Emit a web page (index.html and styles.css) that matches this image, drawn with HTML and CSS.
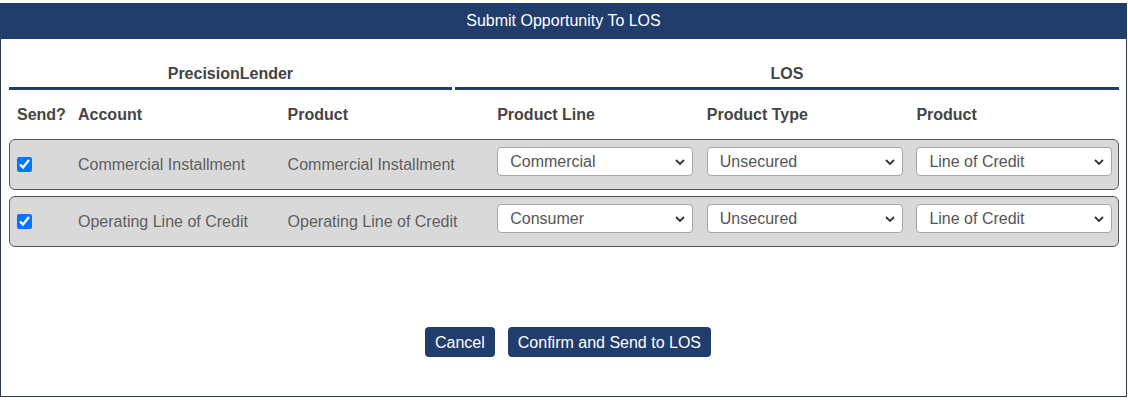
FILE: index.html
```html
<!DOCTYPE html>
<html>
<head>
<meta charset="utf-8">
<link rel="stylesheet" href="styles.css">
</head>
<body>
<div class="dialog">
  <div class="titlebar">Submit Opportunity To LOS</div>
  <div class="content">
    <div class="groups">
      <div class="group">PrecisionLender</div>
      <div class="group">LOS</div>
    </div>
    <div class="grid colheads">
      <div class="cell cb-cell">Send?</div>
      <div class="cell">Account</div>
      <div class="cell">Product</div>
      <div class="cell">Product Line</div>
      <div class="cell">Product Type</div>
      <div class="cell">Product</div>
    </div>
    <div class="rows">
      <div class="grid row">
        <div class="cell cb-cell"><input type="checkbox" class="cb" checked></div>
        <div class="cell txt">Commercial Installment</div>
        <div class="cell txt">Commercial Installment</div>
        <div class="cell"><div class="sel"><select><option>Commercial</option></select><svg class="chev" viewBox="0 0 10 6" width="10" height="6"><path d="M1 1 L5 5 L9 1" fill="none" stroke="#333" stroke-width="1.8"/></svg></div></div>
        <div class="cell"><div class="sel"><select><option>Unsecured</option></select><svg class="chev" viewBox="0 0 10 6" width="10" height="6"><path d="M1 1 L5 5 L9 1" fill="none" stroke="#333" stroke-width="1.8"/></svg></div></div>
        <div class="cell"><div class="sel"><select><option>Line of Credit</option></select><svg class="chev" viewBox="0 0 10 6" width="10" height="6"><path d="M1 1 L5 5 L9 1" fill="none" stroke="#333" stroke-width="1.8"/></svg></div></div>
      </div>
      <div class="grid row">
        <div class="cell cb-cell"><input type="checkbox" class="cb" checked></div>
        <div class="cell txt">Operating Line of Credit</div>
        <div class="cell txt">Operating Line of Credit</div>
        <div class="cell"><div class="sel"><select><option>Consumer</option></select><svg class="chev" viewBox="0 0 10 6" width="10" height="6"><path d="M1 1 L5 5 L9 1" fill="none" stroke="#333" stroke-width="1.8"/></svg></div></div>
        <div class="cell"><div class="sel"><select><option>Unsecured</option></select><svg class="chev" viewBox="0 0 10 6" width="10" height="6"><path d="M1 1 L5 5 L9 1" fill="none" stroke="#333" stroke-width="1.8"/></svg></div></div>
        <div class="cell"><div class="sel"><select><option>Line of Credit</option></select><svg class="chev" viewBox="0 0 10 6" width="10" height="6"><path d="M1 1 L5 5 L9 1" fill="none" stroke="#333" stroke-width="1.8"/></svg></div></div>
      </div>
    </div>
  </div>
  <div class="footer">
    <button class="btn">Cancel</button>
    <button class="btn">Confirm and Send to LOS</button>
  </div>
</div>
</body>
</html>
```
FILE: styles.css
```css
html, body {
  margin: 0;
  padding: 0;
  background: #ffffff;
}
body {
  font-family: "Liberation Sans", Arial, sans-serif;
  font-size: 16px;
  padding-top: 3px;
}
.dialog {
  box-sizing: border-box;
  width: 1127px;
  height: 394px;
  border: 1px solid #2c3a4c;
  border-top: none;
  background: #fff;
}
.titlebar {
  height: 36px;
  margin: 0 -1px;
  background: #213d6b;
  color: #fff;
  font-size: 16px;
  line-height: 36px;
  text-align: center;
}
.content {
  padding: 26px 7px 0 8px;
}
.groups {
  display: grid;
  grid-template-columns: 2fr 3fr;
  column-gap: 3px;
}
.group {
  text-align: center;
  font-weight: bold;
  color: #444;
  line-height: 18px;
  padding-bottom: 4px;
  border-bottom: 3px solid #213d6b;
}
.grid {
  display: grid;
  grid-template-columns: 60px repeat(5, 1fr);
  align-items: center;
  border: 1px solid transparent;
}
.colheads {
  padding: 15px 0 14px;
  font-weight: bold;
  color: #444;
  line-height: 18px;
}
.cell {
  padding-left: 8px;
  padding-right: 5px;
  min-width: 0;
  white-space: nowrap;
}
.cb-cell {
  padding-left: 7px;
  display: flex;
  align-items: center;
}
.rows {
  display: flex;
  flex-direction: column;
  gap: 6px;
}
.row {
  background: #d9d9d9;
  border: 1px solid #555;
  border-radius: 6px;
  padding: 7px 0;
}
.txt {
  color: #5f5f5f;
  line-height: 18px;
  padding-top: 1px;
}
.cb {
  width: 15px;
  height: 15px;
  margin: 0 0 1px 0;
  accent-color: #0075ff;
}
.sel {
  position: relative;
  width: 196px;
  margin-bottom: 6px;
}
.sel select {
  -webkit-appearance: none;
  appearance: none;
  box-sizing: border-box;
  width: 196px;
  height: 29px;
  padding: 0 28px 0 12px;
  border: 1px solid #a6a6a6;
  border-radius: 4px;
  background: #fff;
  color: #555;
  font-family: "Liberation Sans", Arial, sans-serif;
  font-size: 16px;
  line-height: 27px;
  outline: none;
}
.chev {
  position: absolute;
  right: 8px;
  top: 12px;
  pointer-events: none;
}
.footer {
  display: flex;
  justify-content: center;
  gap: 13px;
  padding-left: 9px;
  margin-top: 80px;
}
.btn {
  height: 30px;
  padding: 0 10px;
  border: none;
  border-radius: 4px;
  background: #213d6b;
  color: #fff;
  font-family: "Liberation Sans", Arial, sans-serif;
  font-size: 16px;
  line-height: 31px;
  cursor: pointer;
}
```
